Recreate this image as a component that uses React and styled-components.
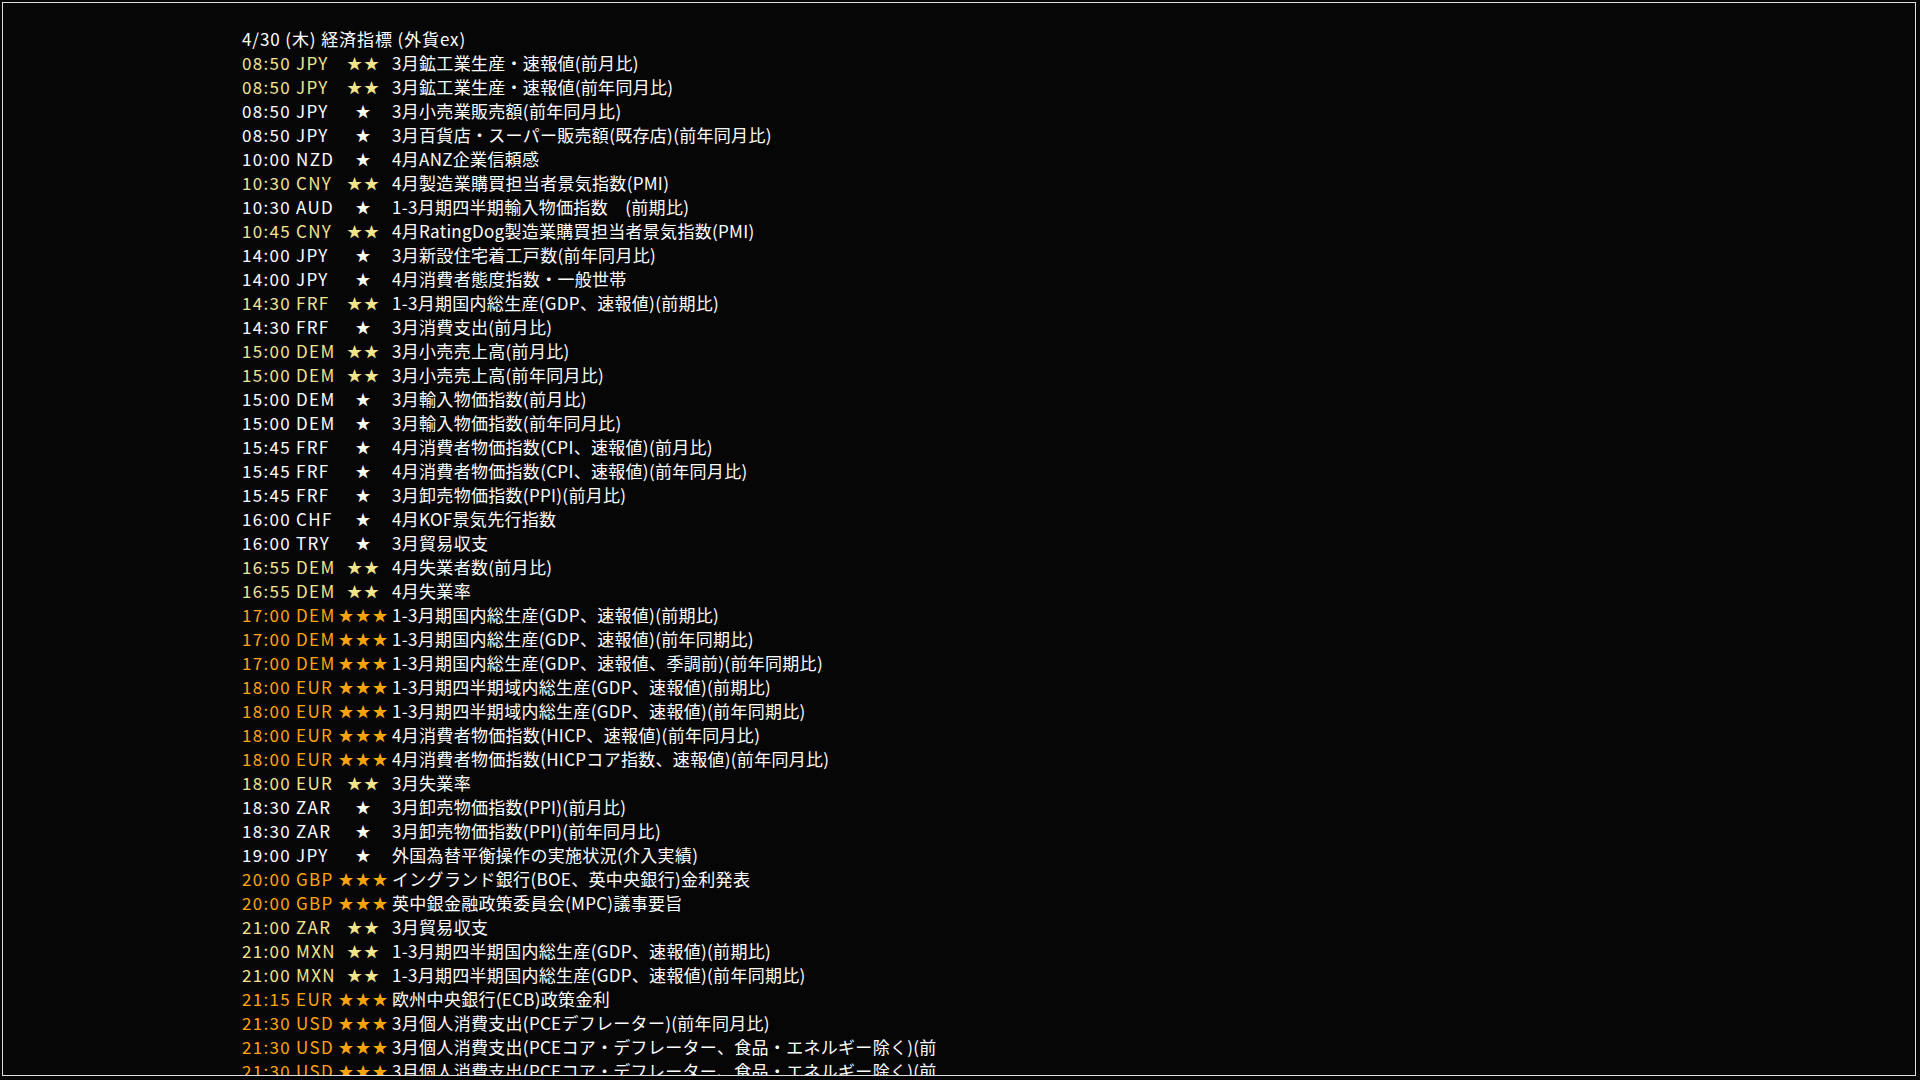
import React from 'react'
import styled, { createGlobalStyle } from 'styled-components'

const GlobalStyle = createGlobalStyle`
  * {
    box-sizing: border-box;
    margin: 0;
    padding: 0;
  }
  html,
  body {
    width: 100%;
    height: 100%;
    background: #060606;
    overflow: hidden;
  }
  body {
    font-family: 'Noto Sans CJK JP', 'Noto Sans', sans-serif;
    color: #ffffff;
  }
`

const levelColor = {
  1: '#ffffff',
  2: '#f3e58e',
  3: '#ffa50a'
}

const Frame = styled.div`
  margin: 2px 4px 4px 2px;
  height: calc(100vh - 6px);
  border: 1px solid #dedede;
  background: #060606;
  overflow: hidden;
  padding: 24px 0 0 239px;
`

const List = styled.div`
  display: flex;
  flex-direction: column;
  width: 720px;
  font-size: 17px;
  line-height: 24px;
  white-space: nowrap;
`

const Title = styled.div`
  color: #ffffff;
  letter-spacing: 0.9px;
`

const Row = styled.div`
  display: grid;
  grid-template-columns: 94px 56px 1fr;
  align-items: center;
  height: 24px;
  color: ${p => levelColor[p.$level]};
`

const Code = styled.span`
  letter-spacing: 1.3px;
  overflow: visible;
`

const Stars = styled.span`
  text-align: center;
  font-size: 15px;
  letter-spacing: 2px;
  color: ${p => levelColor[p.$level]};
`

const Label = styled.span`
  color: #ffffff;
  letter-spacing: 0.3px;
  overflow: hidden;
`

const events = [
  ['08:50', 'JPY', 2, '3月鉱工業生産・速報値(前月比)'],
  ['08:50', 'JPY', 2, '3月鉱工業生産・速報値(前年同月比)'],
  ['08:50', 'JPY', 1, '3月小売業販売額(前年同月比)'],
  ['08:50', 'JPY', 1, '3月百貨店・スーパー販売額(既存店)(前年同月比)'],
  ['10:00', 'NZD', 1, '4月ANZ企業信頼感'],
  ['10:30', 'CNY', 2, '4月製造業購買担当者景気指数(PMI)'],
  ['10:30', 'AUD', 1, '1-3月期四半期輸入物価指数　(前期比)'],
  ['10:45', 'CNY', 2, '4月RatingDog製造業購買担当者景気指数(PMI)'],
  ['14:00', 'JPY', 1, '3月新設住宅着工戸数(前年同月比)'],
  ['14:00', 'JPY', 1, '4月消費者態度指数・一般世帯'],
  ['14:30', 'FRF', 2, '1-3月期国内総生産(GDP、速報値)(前期比)'],
  ['14:30', 'FRF', 1, '3月消費支出(前月比)'],
  ['15:00', 'DEM', 2, '3月小売売上高(前月比)'],
  ['15:00', 'DEM', 2, '3月小売売上高(前年同月比)'],
  ['15:00', 'DEM', 1, '3月輸入物価指数(前月比)'],
  ['15:00', 'DEM', 1, '3月輸入物価指数(前年同月比)'],
  ['15:45', 'FRF', 1, '4月消費者物価指数(CPI、速報値)(前月比)'],
  ['15:45', 'FRF', 1, '4月消費者物価指数(CPI、速報値)(前年同月比)'],
  ['15:45', 'FRF', 1, '3月卸売物価指数(PPI)(前月比)'],
  ['16:00', 'CHF', 1, '4月KOF景気先行指数'],
  ['16:00', 'TRY', 1, '3月貿易収支'],
  ['16:55', 'DEM', 2, '4月失業者数(前月比)'],
  ['16:55', 'DEM', 2, '4月失業率'],
  ['17:00', 'DEM', 3, '1-3月期国内総生産(GDP、速報値)(前期比)'],
  ['17:00', 'DEM', 3, '1-3月期国内総生産(GDP、速報値)(前年同期比)'],
  ['17:00', 'DEM', 3, '1-3月期国内総生産(GDP、速報値、季調前)(前年同期比)'],
  ['18:00', 'EUR', 3, '1-3月期四半期域内総生産(GDP、速報値)(前期比)'],
  ['18:00', 'EUR', 3, '1-3月期四半期域内総生産(GDP、速報値)(前年同期比)'],
  ['18:00', 'EUR', 3, '4月消費者物価指数(HICP、速報値)(前年同月比)'],
  ['18:00', 'EUR', 3, '4月消費者物価指数(HICPコア指数、速報値)(前年同月比)'],
  ['18:00', 'EUR', 2, '3月失業率'],
  ['18:30', 'ZAR', 1, '3月卸売物価指数(PPI)(前月比)'],
  ['18:30', 'ZAR', 1, '3月卸売物価指数(PPI)(前年同月比)'],
  ['19:00', 'JPY', 1, '外国為替平衡操作の実施状況(介入実績)'],
  ['20:00', 'GBP', 3, 'イングランド銀行(BOE、英中央銀行)金利発表'],
  ['20:00', 'GBP', 3, '英中銀金融政策委員会(MPC)議事要旨'],
  ['21:00', 'ZAR', 2, '3月貿易収支'],
  ['21:00', 'MXN', 2, '1-3月期四半期国内総生産(GDP、速報値)(前期比)'],
  ['21:00', 'MXN', 2, '1-3月期四半期国内総生産(GDP、速報値)(前年同期比)'],
  ['21:15', 'EUR', 3, '欧州中央銀行(ECB)政策金利'],
  ['21:30', 'USD', 3, '3月個人消費支出(PCEデフレーター)(前年同月比)'],
  ['21:30', 'USD', 3, '3月個人消費支出(PCEコア・デフレーター、食品・エネルギー除く)(前'],
  ['21:30', 'USD', 3, '3月個人消費支出(PCEコア・デフレーター、食品・エネルギー除く)(前']
]

const App = () => (
  <>
    <GlobalStyle />
    <Frame>
      <List>
        <Title>4/30 (木) 経済指標 (外貨ex)</Title>
        {events.map(([time, cur, level, label], i) => (
          <Row key={i} $level={level}>
            <Code>{time} {cur}</Code>
            <Stars $level={level}>{'★'.repeat(level)}</Stars>
            <Label>{label}</Label>
          </Row>
        ))}
      </List>
    </Frame>
  </>
)

export default App
